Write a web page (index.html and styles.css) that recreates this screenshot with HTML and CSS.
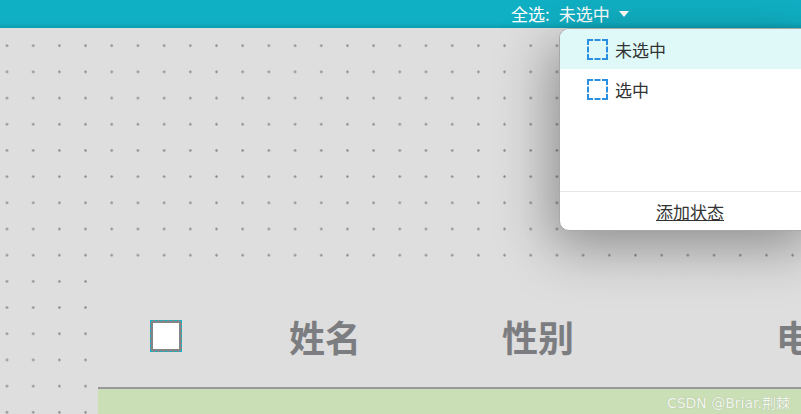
FILE: index.html
```html
<!DOCTYPE html>
<html lang="zh-CN">
<head>
    <meta charset="UTF-8">
    <meta name="viewport" content="width=device-width, initial-scale=1.0">
    <title>全选</title>
    <link rel="stylesheet" href="styles.css">
</head>
<body>

<!-- Top bar -->
<div class="topbar">
    <span class="select-all">全选:</span>
    <span class="select-value">未选中</span>
    <span class="caret"></span>
</div>

<!-- Canvas -->
<div class="canvas">
    <div class="panel">
        <div class="head-row">
            <div class="cell cell-check"><span class="box"></span></div>
            <div class="cell cell-name">姓名</div>
            <div class="cell cell-sex">性别</div>
            <div class="cell cell-phone">电话</div>
        </div>
        <div class="body-row">
            <span class="mark">CSDN @Briar.荆棘</span>
        </div>
    </div>
</div>

<!-- State dropdown -->
<div class="dropdown">
    <div class="states">
        <div class="state active"><span class="state-box"></span>未选中</div>
        <div class="state"><span class="state-box"></span>选中</div>
    </div>
    <div class="dropdown-foot">
        <a class="add-state">添加状态</a>
    </div>
</div>

</body>
</html>
```

FILE: styles.css
```css
body {
    margin: 0;
    width: 801px;
    height: 414px;
    overflow: hidden;
    position: relative;
    font-family: "Noto Sans CJK SC", "Noto Sans", sans-serif;
    background-color: #dedede;
}
.topbar {
    height: 28px;
    background: linear-gradient(#10b0c4 80%, #0c9fb2);
    color: #ffffff;
    display: flex;
    align-items: center;
    padding-left: 511px;
    box-sizing: border-box;
    font-size: 17px;
    line-height: 28px;
}
.select-value {
    margin-left: 9px;
}
.caret {
    margin-left: 9px;
    width: 0;
    height: 0;
    border-left: 5px solid transparent;
    border-right: 5px solid transparent;
    border-top: 6px solid #ffffff;
}
.canvas {
    height: 386px;
    box-sizing: border-box;
    padding-top: 252px;
    padding-left: 98px;
    background-color: #dedede;
    background-image: radial-gradient(circle, #8e8e8e 0.9px, rgba(150,150,150,0.3) 1.3px, transparent 1.8px);
    background-size: 26.2px 26.2px;
    background-position: -6.1px 4.6px;
}
.panel {
    height: 134px;
    background-color: #dedede;
    display: flex;
    flex-direction: column;
}
.head-row {
    height: 109px;
    box-sizing: border-box;
    padding-top: 5px;
    border-bottom: 2px solid #999999;
    display: flex;
    align-items: center;
}
.cell {
    flex-shrink: 0;
    text-align: center;
    font-size: 36px;
    font-weight: bold;
    color: #7c7d81;
    white-space: nowrap;
}
.cell-check {
    width: 136px;
    display: flex;
    justify-content: center;
}
.cell-name {
    width: 182px;
}
.cell-sex {
    width: 244px;
}
.cell-phone {
    width: 304px;
}
.box {
    width: 32px;
    height: 32px;
    box-sizing: border-box;
    border: 3px solid #858585;
    background-color: #ffffff;
    outline: 1px dashed #17b0c4;
    outline-offset: -1px;
}
.body-row {
    flex: 1;
    background-color: #cbdfb7;
    display: flex;
    justify-content: flex-end;
    align-items: center;
    padding-right: 11px;
}
.mark {
    font-family: "DejaVu Sans", "Noto Sans CJK SC", sans-serif;
    font-size: 14px;
    color: #f4f7f0;
    text-shadow: 0 0 1px rgba(120,140,110,0.6);
}
.dropdown {
    position: absolute;
    left: 559px;
    top: 28px;
    width: 262px;
    height: 203px;
    box-sizing: border-box;
    background-color: #ffffff;
    border: 1px solid #a8a8a8;
    border-radius: 10px;
    box-shadow: -8px 16px 54px rgba(0,0,0,0.36);
    display: flex;
    flex-direction: column;
    overflow: hidden;
}
.states {
    flex: 1;
}
.state {
    height: 40px;
    display: flex;
    align-items: center;
    padding-left: 27px;
    font-size: 17px;
    line-height: 1;
    color: #333333;
}
.state.active {
    background-color: #dff9f9;
}
.state-box {
    width: 21px;
    height: 21px;
    box-sizing: border-box;
    border: 2px dashed #2a8fe0;
    margin-right: 7px;
}
.dropdown-foot {
    height: 38px;
    border-top: 1px solid #e6e6e6;
    display: flex;
    align-items: center;
    justify-content: center;
}
.add-state {
    font-size: 17px;
    color: #333333;
    text-decoration: underline;
}
```
